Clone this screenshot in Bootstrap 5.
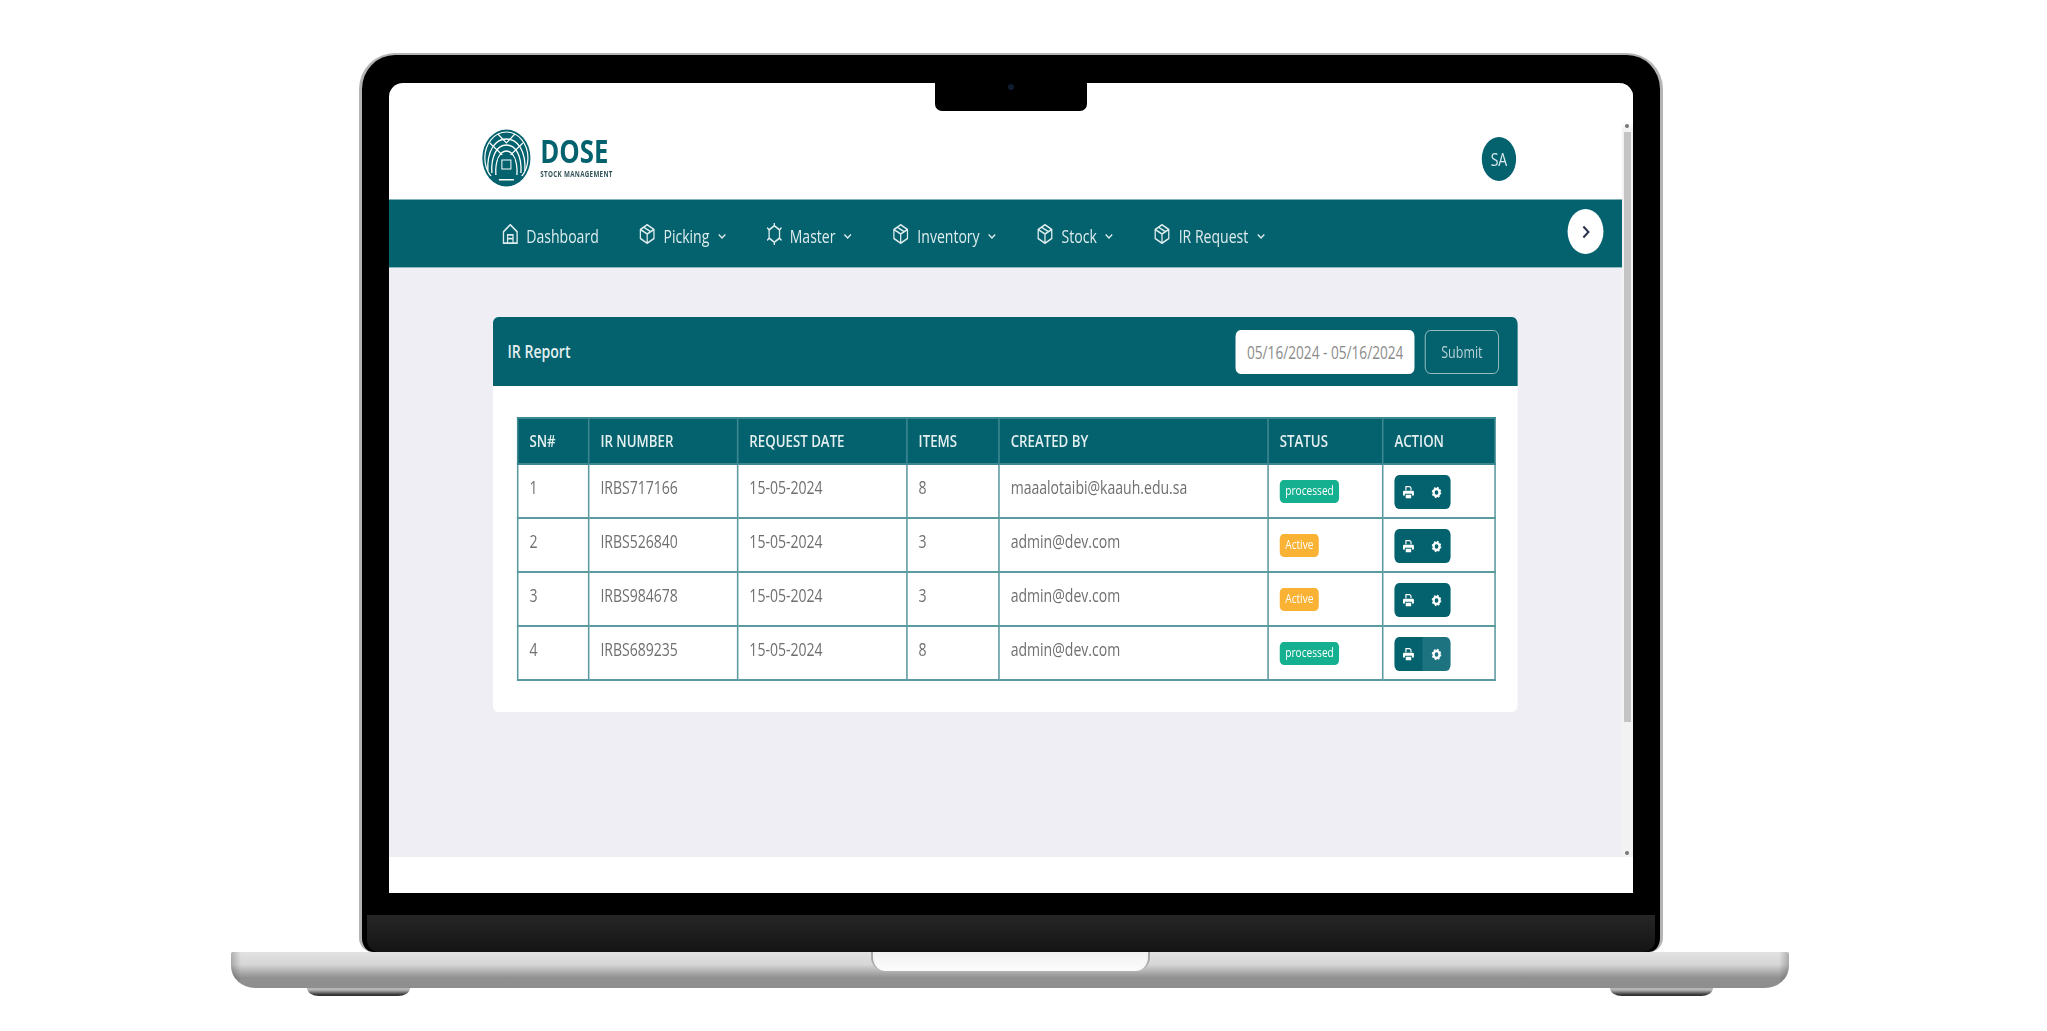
<!DOCTYPE html>
<html lang="en">

<head>
    <meta charset="UTF-8">
    <meta name="viewport" content="width=device-width, initial-scale=1.0">
    <title>IR Report</title>
    <link href="https://cdn.jsdelivr.net/npm/bootstrap@5.3.0/dist/css/bootstrap.min.css" rel="stylesheet">
    <style>
        :root { --dose-teal: #03626e; }
        body { background: #fff; height: 1031px; overflow: hidden; font-family: "Open Sans", "Liberation Sans", sans-serif; }

        /* laptop frame */
        .device { width: 1558px; margin: 53px 0 0 231px; }
        .lid { width: 1304px; height: 899px; margin-left: 128px; padding: 28px 27px 0; background: #000; border: 3px solid #b4b4b4; border-top-width: 2px; border-bottom: 0; border-radius: 36px 36px 14px 14px; }
        .screen { height: 810px; background: #fff; border-radius: 14px 14px 0 0; overflow: hidden; position: relative; }
        .cam-notch { position: absolute; top: 0; left: 546px; width: 152px; height: 28px; background: #000; border-radius: 0 0 7px 7px; }
        .cam-dot { position: absolute; top: 1px; left: 73px; width: 6px; height: 6px; border-radius: 50%; background: #101c30; }
        .chin { height: 37px; margin: 22px -22px 0; background: linear-gradient(#262626, #141414); border-radius: 0 0 12px 12px; }
        .base { height: 36px; position: relative; border-radius: 2px 2px 24px 24px / 2px 2px 22px 22px; background: linear-gradient(90deg, rgba(0,0,0,.22), transparent 10px, transparent calc(100% - 10px), rgba(0,0,0,.22)), linear-gradient(#e2e2e2 0, #d6d6d6 35%, #a9a9a9 58%, #909090 72%, #8e8e8e 100%); }
        .base-notch { position: absolute; top: 0; left: 640px; width: 279px; height: 19px; background: linear-gradient(#f2f2f2, #fcfcfc); border: 2px solid #a8a8a8; border-width: 0 2px; border-radius: 0 0 14px 14px; }
        .feet { padding: 0 76px; }
        .foot { width: 103px; height: 8px; background: linear-gradient(#b5b5b5 25%, #333 85%); border-radius: 0 0 12px 12px / 0 0 8px 8px; }

        /* app inside the screen, the reference squeezes it sideways */
        .app { width: 1581px; transform: scaleX(.78); transform-origin: 0 0; filter: blur(.5px); }
        .app-head { height: 116px; padding: 46px 136px 0 119px; }
        .logo-word { color: var(--dose-teal); line-height: 1; margin-left: 12px; }
        .logo-word b { display: block; font-size: 33px; line-height: 26px; font-weight: 700; }
        .logo-word span { display: block; font-size: 8px; font-weight: 700; color: #34555a; margin-top: 6px; letter-spacing: .4px; }
        .avatar { width: 44px; height: 44px; border-radius: 50%; background: var(--dose-teal); color: #dcecee; font-size: 18px; margin-top: 8px; }
        .top-nav { height: 69px; background: var(--dose-teal); border-top: 1px solid #7fb2b8; border-bottom: 1px solid #8fbcc1; padding: 0 24px 0 137px; }
        .top-nav .navbar-nav { padding-top: 5px; }
        .top-nav .nav-link { color: #dfecee; font-size: 18px; padding: 0; display: flex; align-items: center; }
        .top-nav .nav-item { margin-right: 35px; }
        .top-nav .nav-ico { margin-right: 10px; margin-top: -5px; }
        .top-nav .nav-chev { margin-left: 10px; }
        .next-btn { width: 46px; height: 45px; border-radius: 50%; background: #fff; margin-top: -4px; }
        .page-bg { height: 589px; background: #eeeef4; padding: 49px 133px 0; }
        .report-card { width: 1314px; height: 395px; border: 0; border-radius: 7px; }
        .report-card .card-header { height: 70px; background: var(--dose-teal); border: 0; color: #e4eff0; font-size: 18px; font-weight: 600; padding: 0 24px 0 19px; border-radius: 7px 7px 0 0; }
        .date-field { width: 230px; height: 44px; border: 0; border-radius: 7px; color: #8b8b8b; font-size: 17.500px; padding: 0 15px; }
        .date-field:focus { color: #8b8b8b; }
        .submit-btn { width: 95px; height: 44px; margin-left: 13px; padding: 0; color: #b9d2d5; border: 1px solid #a9c9cd; border-radius: 7px; font-size: 16px; }
        .report-card .card-body { padding: 31px 31px; }
        .ir-table { table-layout: fixed; width: 1253px; margin: 0; font-size: 18px; border-color: #5b9aa0; }
        .ir-table col:nth-child(1) { width: 91px; }
        .ir-table col:nth-child(2) { width: 191px; }
        .ir-table col:nth-child(3) { width: 217px; }
        .ir-table col:nth-child(4) { width: 118px; }
        .ir-table col:nth-child(5) { width: 345px; }
        .ir-table col:nth-child(6) { width: 147px; }
        .ir-table col:nth-child(7) { width: 144px; }
        .ir-table > :not(caption) > * > * { border-width: 2px; border-color: #5b9aa0; padding: 9px 14px 0; height: 54px; color: #6f6f6f; vertical-align: top; }
        .ir-table > thead > tr > th { height: 46px; background: var(--dose-teal); color: #e4eff0; font-weight: 600; font-size: 17px; padding: 0 14px; vertical-align: middle; border-color: #3d8791; }
        .badge-st { display: inline-block; height: 23px; line-height: 21px; padding: 0 7px; margin-top: 4px; border-radius: 5px; color: #fff; font-size: 13px; }
        .st-processed { background: #14b08f; }
        .st-active { background: #f9b233; }
        .act-group { width: 72px; height: 34px; }
        .act-group .btn { width: 36px; padding: 0; background: var(--dose-teal); border: 0; display: flex; align-items: center; justify-content: center; }
        .act-group .btn.is-hover { background: #1d7480; }
        .ir-table > tbody > tr > td.act-cell { padding: 10px 14px 0; }
        .ir-table > tbody > tr > td.st-cell { padding: 10px 14px 0; }

        /* scrollbar strip */
        .scroll-strip { position: absolute; top: 0; right: 0; width: 11px; height: 774px; background: linear-gradient(#fff 40px, #f2f2f2 46px); }
        .scroll-thumb { position: absolute; top: 49px; left: 2px; width: 7px; height: 590px; background: #c4c4c4; }
        .scroll-dot { position: absolute; left: 3px; width: 4px; height: 4px; background: #777; border-radius: 50%; }
        .dot-up { top: 41px; }
        .dot-down { top: 768px; }
    </style>
</head>

<body>
    <svg width="0" height="0" class="position-absolute">
        <symbol id="ico-box" viewBox="0 0 24 24" preserveAspectRatio="none">
            <path d="M12 2 21.500 7v10L12 22l-9.500-5V7z M2.500 7 12 12l9.500-5 M12 12v10 M7 4.500l10 5" fill="none" stroke="currentColor" stroke-width="1.800" stroke-linejoin="round" />
        </symbol>
        <symbol id="ico-chev" viewBox="0 0 10 10" preserveAspectRatio="none">
            <path d="M1.500 3.500 5 7l3.500-3.500" fill="none" stroke="currentColor" stroke-width="1.500" />
        </symbol>
        <symbol id="ico-print" viewBox="0 0 16 16" preserveAspectRatio="none">
            <path fill="#fff" d="M4 1h6l2 2v3h-1.500V3.500L9.500 2.500h-4V6H4z M2.500 6.500h11A1.500 1.500 0 0 1 15 8v4h-2.500v-2h-9v2H1V8a1.500 1.500 0 0 1 1.500-1.500z M4.500 11h7v4h-7z" />
        </symbol>
        <symbol id="ico-gear" viewBox="0 0 16 16" preserveAspectRatio="none">
            <circle cx="8" cy="8" r="4.300" fill="none" stroke="#fff" stroke-width="3.200" />
            <circle cx="8" cy="8" r="6.200" fill="none" stroke="#fff" stroke-width="1.600" stroke-dasharray="2.400 2.470" />
        </symbol>
    </svg>

    <div class="device">
        <div class="lid">
            <div class="screen">
                <div class="app">
                    <header class="app-head d-flex justify-content-between align-items-start">
                        <div class="d-flex align-items-center">
                            <svg width="63" height="58" viewBox="0 0 49 58" preserveAspectRatio="none">
                                <ellipse cx="24.500" cy="29" rx="24" ry="28.500" fill="#03626e" />
                                <g fill="none" stroke="#fff">
                                    <ellipse cx="24.500" cy="29" rx="21.500" ry="26" stroke-width="1.200" />
                                    <path d="M6 42C5 22 13 10 24.500 10S44 22 43 42 M10 44C9 27 15 16 24.500 16S40 27 39 44 M14 46C13 32 18 22 24.500 22S36 32 35 46" stroke-width="1.300" />
                                    <path d="M8 14 24.500 30 41 14 M16 5 24.500 14 33 5" stroke-width="1.200" />
                                </g>
                                <path d="M16 48V33q0-8 8.500-8T33 33v15z" fill="#03626e" />
                                <rect x="20" y="31" width="9" height="9" fill="none" stroke="#fff" />
                                <path d="M8 47h33q-6 10-16.500 10T8 47z" fill="#03626e" />
                                <rect x="17" y="50" width="15" height="1.500" fill="#fff" />
                            </svg>
                            <div class="logo-word"><b>DOSE</b><span>STOCK MANAGEMENT</span></div>
                        </div>
                        <div class="avatar d-flex align-items-center justify-content-center">SA</div>
                    </header>

                    <nav class="top-nav navbar navbar-expand justify-content-between">
                        <ul class="navbar-nav">
                            <li class="nav-item"><a class="nav-link" href="#">
                                <svg class="nav-ico" width="21" height="22" viewBox="0 0 24 24" preserveAspectRatio="none"><path d="M12 2 22 9.500V22H2V9.500z" fill="none" stroke="currentColor" stroke-width="2" stroke-linejoin="round" /><path d="M8 22v-9h8v9 M8 17h8" fill="none" stroke="currentColor" stroke-width="1.800" /></svg>Dashboard</a></li>
                            <li class="nav-item"><a class="nav-link" href="#"><svg class="nav-ico" width="22" height="22"><use href="#ico-box" /></svg>Picking<svg class="nav-chev" width="12" height="10"><use href="#ico-chev" /></svg></a></li>
                            <li class="nav-item"><a class="nav-link" href="#">
                                <svg class="nav-ico" width="20" height="22" viewBox="0 0 24 24" preserveAspectRatio="none"><path d="M12 3 20 7.500v9L12 21l-8-4.500v-9z" fill="none" stroke="currentColor" stroke-width="2" stroke-linejoin="round" /><path d="M12 0v3 M12 21v3 M1 5l3 2.500 M23 5l-3 2.500 M1 19l3-2.500 M23 19l-3-2.500" stroke="currentColor" stroke-width="2" /></svg>Master<svg class="nav-chev" width="12" height="10"><use href="#ico-chev" /></svg></a></li>
                            <li class="nav-item"><a class="nav-link" href="#"><svg class="nav-ico" width="22" height="22"><use href="#ico-box" /></svg>Inventory<svg class="nav-chev" width="12" height="10"><use href="#ico-chev" /></svg></a></li>
                            <li class="nav-item"><a class="nav-link" href="#"><svg class="nav-ico" width="22" height="22"><use href="#ico-box" /></svg>Stock<svg class="nav-chev" width="12" height="10"><use href="#ico-chev" /></svg></a></li>
                            <li class="nav-item"><a class="nav-link" href="#"><svg class="nav-ico" width="22" height="22"><use href="#ico-box" /></svg>IR Request<svg class="nav-chev" width="12" height="10"><use href="#ico-chev" /></svg></a></li>
                        </ul>
                        <div class="next-btn d-flex align-items-center justify-content-center">
                            <svg width="13" height="16" viewBox="0 0 10 16" preserveAspectRatio="none"><path d="M2.500 2.500 7.500 8l-5 5.500" fill="none" stroke="#2c3350" stroke-width="2" /></svg>
                        </div>
                    </nav>

                    <main class="page-bg">
                        <div class="card report-card">
                            <div class="card-header d-flex align-items-center justify-content-between">
                                <span>IR Report</span>
                                <div class="d-flex">
                                    <input class="form-control date-field" type="text" value="05/16/2024 - 05/16/2024">
                                    <button class="btn submit-btn" type="button">Submit</button>
                                </div>
                            </div>
                            <div class="card-body">
                                <table class="table table-bordered ir-table">
                                    <colgroup>
                                        <col><col><col><col><col><col><col>
                                    </colgroup>
                                    <thead>
                                        <tr><th>SN#</th><th>IR NUMBER</th><th>REQUEST DATE</th><th>ITEMS</th><th>CREATED BY</th><th>STATUS</th><th>ACTION</th></tr>
                                    </thead>
                                    <tbody id="ir-rows"></tbody>
                                </table>
                            </div>
                        </div>
                    </main>
                </div>
                <div class="scroll-strip">
                    <div class="scroll-thumb"></div>
                    <div class="scroll-dot dot-up"></div>
                    <div class="scroll-dot dot-down"></div>
                </div>
                <div class="cam-notch"><div class="cam-dot"></div></div>
            </div>
            <div class="chin"></div>
        </div>
        <div class="base"><div class="base-notch"></div></div>
        <div class="feet d-flex justify-content-between"><div class="foot"></div><div class="foot"></div></div>
    </div>

    <script>
        const rows = [
            ['IRBS717166', 8, 'maaalotaibi@kaauh.edu.sa', 'processed'],
            ['IRBS526840', 3, 'admin@dev.com', 'Active'],
            ['IRBS984678', 3, 'admin@dev.com', 'Active'],
            ['IRBS689235', 8, 'admin@dev.com', 'processed']
        ];
        const body = document.getElementById('ir-rows');
        rows.forEach((r, i) => {
            const cls = r[3] === 'Active' ? 'st-active' : 'st-processed';
            const hover = i === 3 ? ' is-hover' : '';
            body.insertAdjacentHTML('beforeend', `
                <tr>
                    <td>${i + 1}</td>
                    <td>${r[0]}</td>
                    <td>15-05-2024</td>
                    <td>${r[1]}</td>
                    <td>${r[2]}</td>
                    <td class="st-cell"><span class="badge-st ${cls}">${r[3]}</span></td>
                    <td class="act-cell">
                        <div class="btn-group act-group">
                            <button class="btn" type="button"><svg width="16" height="14"><use href="#ico-print" /></svg></button>
                            <button class="btn${hover}" type="button"><svg width="14" height="13"><use href="#ico-gear" /></svg></button>
                        </div>
                    </td>
                </tr>`);
        });
    </script>
</body>

</html>
